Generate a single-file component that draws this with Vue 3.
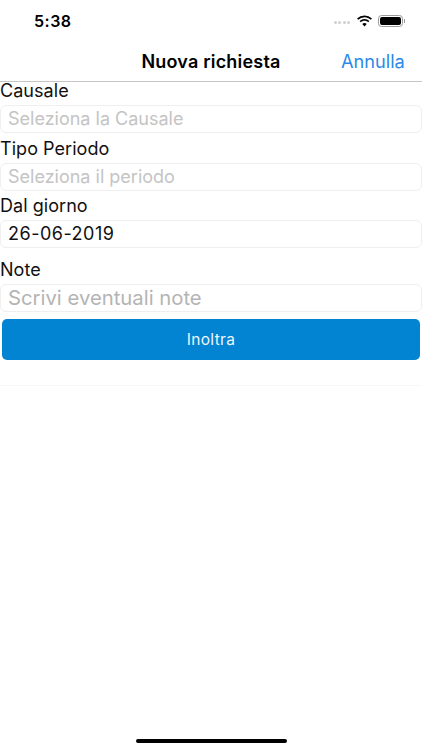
<script setup>
const fields = [
  { label: 'Causale', value: 'Seleziona la Causale', kind: 'placeholder' },
  { label: 'Tipo Periodo', value: 'Seleziona il periodo', kind: 'placeholder' },
  { label: 'Dal giorno', value: '26-06-2019', kind: 'date' },
  { label: 'Note', value: 'Scrivi eventuali note', kind: 'note' }
]
</script>

<template>
  <div class="screen">
    <header class="status">
      <span class="time">5:38</span>
      <div class="status-icons">
        <span class="signal"><i></i><i></i><i></i><i></i></span>
        <svg class="wifi" width="17" height="12" viewBox="0 0 17 12">
          <path d="M8.5 2.2c2.4 0 4.6.9 6.3 2.5l1.2-1.3A10.9 10.9 0 0 0 8.5.4 10.9 10.9 0 0 0 1 3.4l1.2 1.3a9.1 9.1 0 0 1 6.3-2.5z" fill="#000"/>
          <path d="M8.5 5.8c1.4 0 2.7.5 3.7 1.5l1.2-1.3a7.1 7.1 0 0 0-9.8 0l1.2 1.3c1-1 2.3-1.5 3.7-1.5z" fill="#000"/>
          <path d="M8.5 8.1c-.9 0-1.6.3-2.2.9l2.2 2.4 2.2-2.4c-.6-.6-1.3-.9-2.2-.9z" fill="#000"/>
        </svg>
        <span class="battery"><span class="battery-fill"></span></span>
        <span class="battery-cap"></span>
      </div>
    </header>
    <nav class="nav">
      <span class="nav-side"></span>
      <h1 class="title">Nuova richiesta</h1>
      <span class="nav-side cancel">Annulla</span>
    </nav>
    <main class="form">
      <div v-for="f in fields" :key="f.label" class="group">
        <div class="label">{{ f.label }}</div>
        <div class="input" :class="f.kind">{{ f.value }}</div>
      </div>
      <button class="submit" type="button">Inoltra</button>
      <div class="faint"></div>
    </main>
    <div class="home"></div>
  </div>
</template>

<style scoped>
.screen {
  width: 422px;
  height: 750px;
  position: relative;
  overflow: hidden;
  background: #fff;
  font-family: Inter, "Liberation Sans", sans-serif;
  color: #000;
}
.status {
  height: 43px;
  box-sizing: border-box;
  display: flex;
  align-items: center;
  justify-content: space-between;
  padding: 0 17px 1px 34px;
}
.time {
  font-size: 16px;
  font-weight: 600;
  letter-spacing: 0.5px;
}
.status-icons {
  display: flex;
  align-items: center;
}
.signal {
  display: flex;
  gap: 1.5px;
  margin-right: 6px;
  margin-top: 3px;
}
.signal i {
  width: 3px;
  height: 3px;
  border-radius: 50%;
  background: #d0d0d0;
}
.wifi {
  margin-right: 5px;
}
.battery {
  width: 25px;
  height: 12px;
  box-sizing: border-box;
  border: 1px solid #9a9a9a;
  border-radius: 3.5px;
  padding: 1px;
  display: flex;
}
.battery-fill {
  flex: 1;
  background: #000;
  border-radius: 2px;
}
.battery-cap {
  width: 1px;
  height: 4px;
  margin-left: 1px;
  background: #9a9a9a;
}
.nav {
  height: 39px;
  box-sizing: border-box;
  border-bottom: 1px solid #c6c6c6;
  display: flex;
  align-items: center;
  justify-content: space-between;
  padding: 0 18px 2px;
}
.nav-side {
  width: 63px;
}
.title {
  margin: 0;
  font-size: 18px;
  font-weight: 600;
  letter-spacing: 0.2px;
}
.cancel {
  font-size: 18.2px;
  color: #2b8ae8;
  text-align: right;
  white-space: nowrap;
}
.form {
  display: flex;
  flex-direction: column;
}
.group {
  display: flex;
  flex-direction: column;
}
.label {
  height: 23px;
  line-height: 18px;
  font-size: 18px;
  letter-spacing: 0.05px;
  color: #111;
}
.input {
  height: 28px;
  box-sizing: border-box;
  border: 1px solid #efefef;
  border-radius: 6px;
  padding-left: 7px;
  line-height: 25px;
  white-space: nowrap;
}
.placeholder {
  font-size: 18px;
  color: #c4c4c4;
  margin-bottom: 6.5px;
}
.date {
  font-size: 18px;
  line-height: 26px;
  letter-spacing: 0.5px;
  color: #111;
  margin-bottom: 13px;
}
.note {
  font-size: 20.3px;
  color: #b4b4b4;
}
.submit {
  height: 41px;
  margin: 7px 2px 0;
  border: 0;
  border-radius: 5px;
  background: #0284d2;
  color: #eef6fc;
  font: 400 15.5px Inter, "Liberation Sans", sans-serif;
  letter-spacing: 0.3px;
}
.faint {
  height: 1px;
  margin-top: 25px;
  background: #f8f8f8;
}
.home {
  position: absolute;
  left: 136px;
  bottom: 7px;
  width: 151px;
  height: 4px;
  border-radius: 2px;
  background: #000;
}
</style>
